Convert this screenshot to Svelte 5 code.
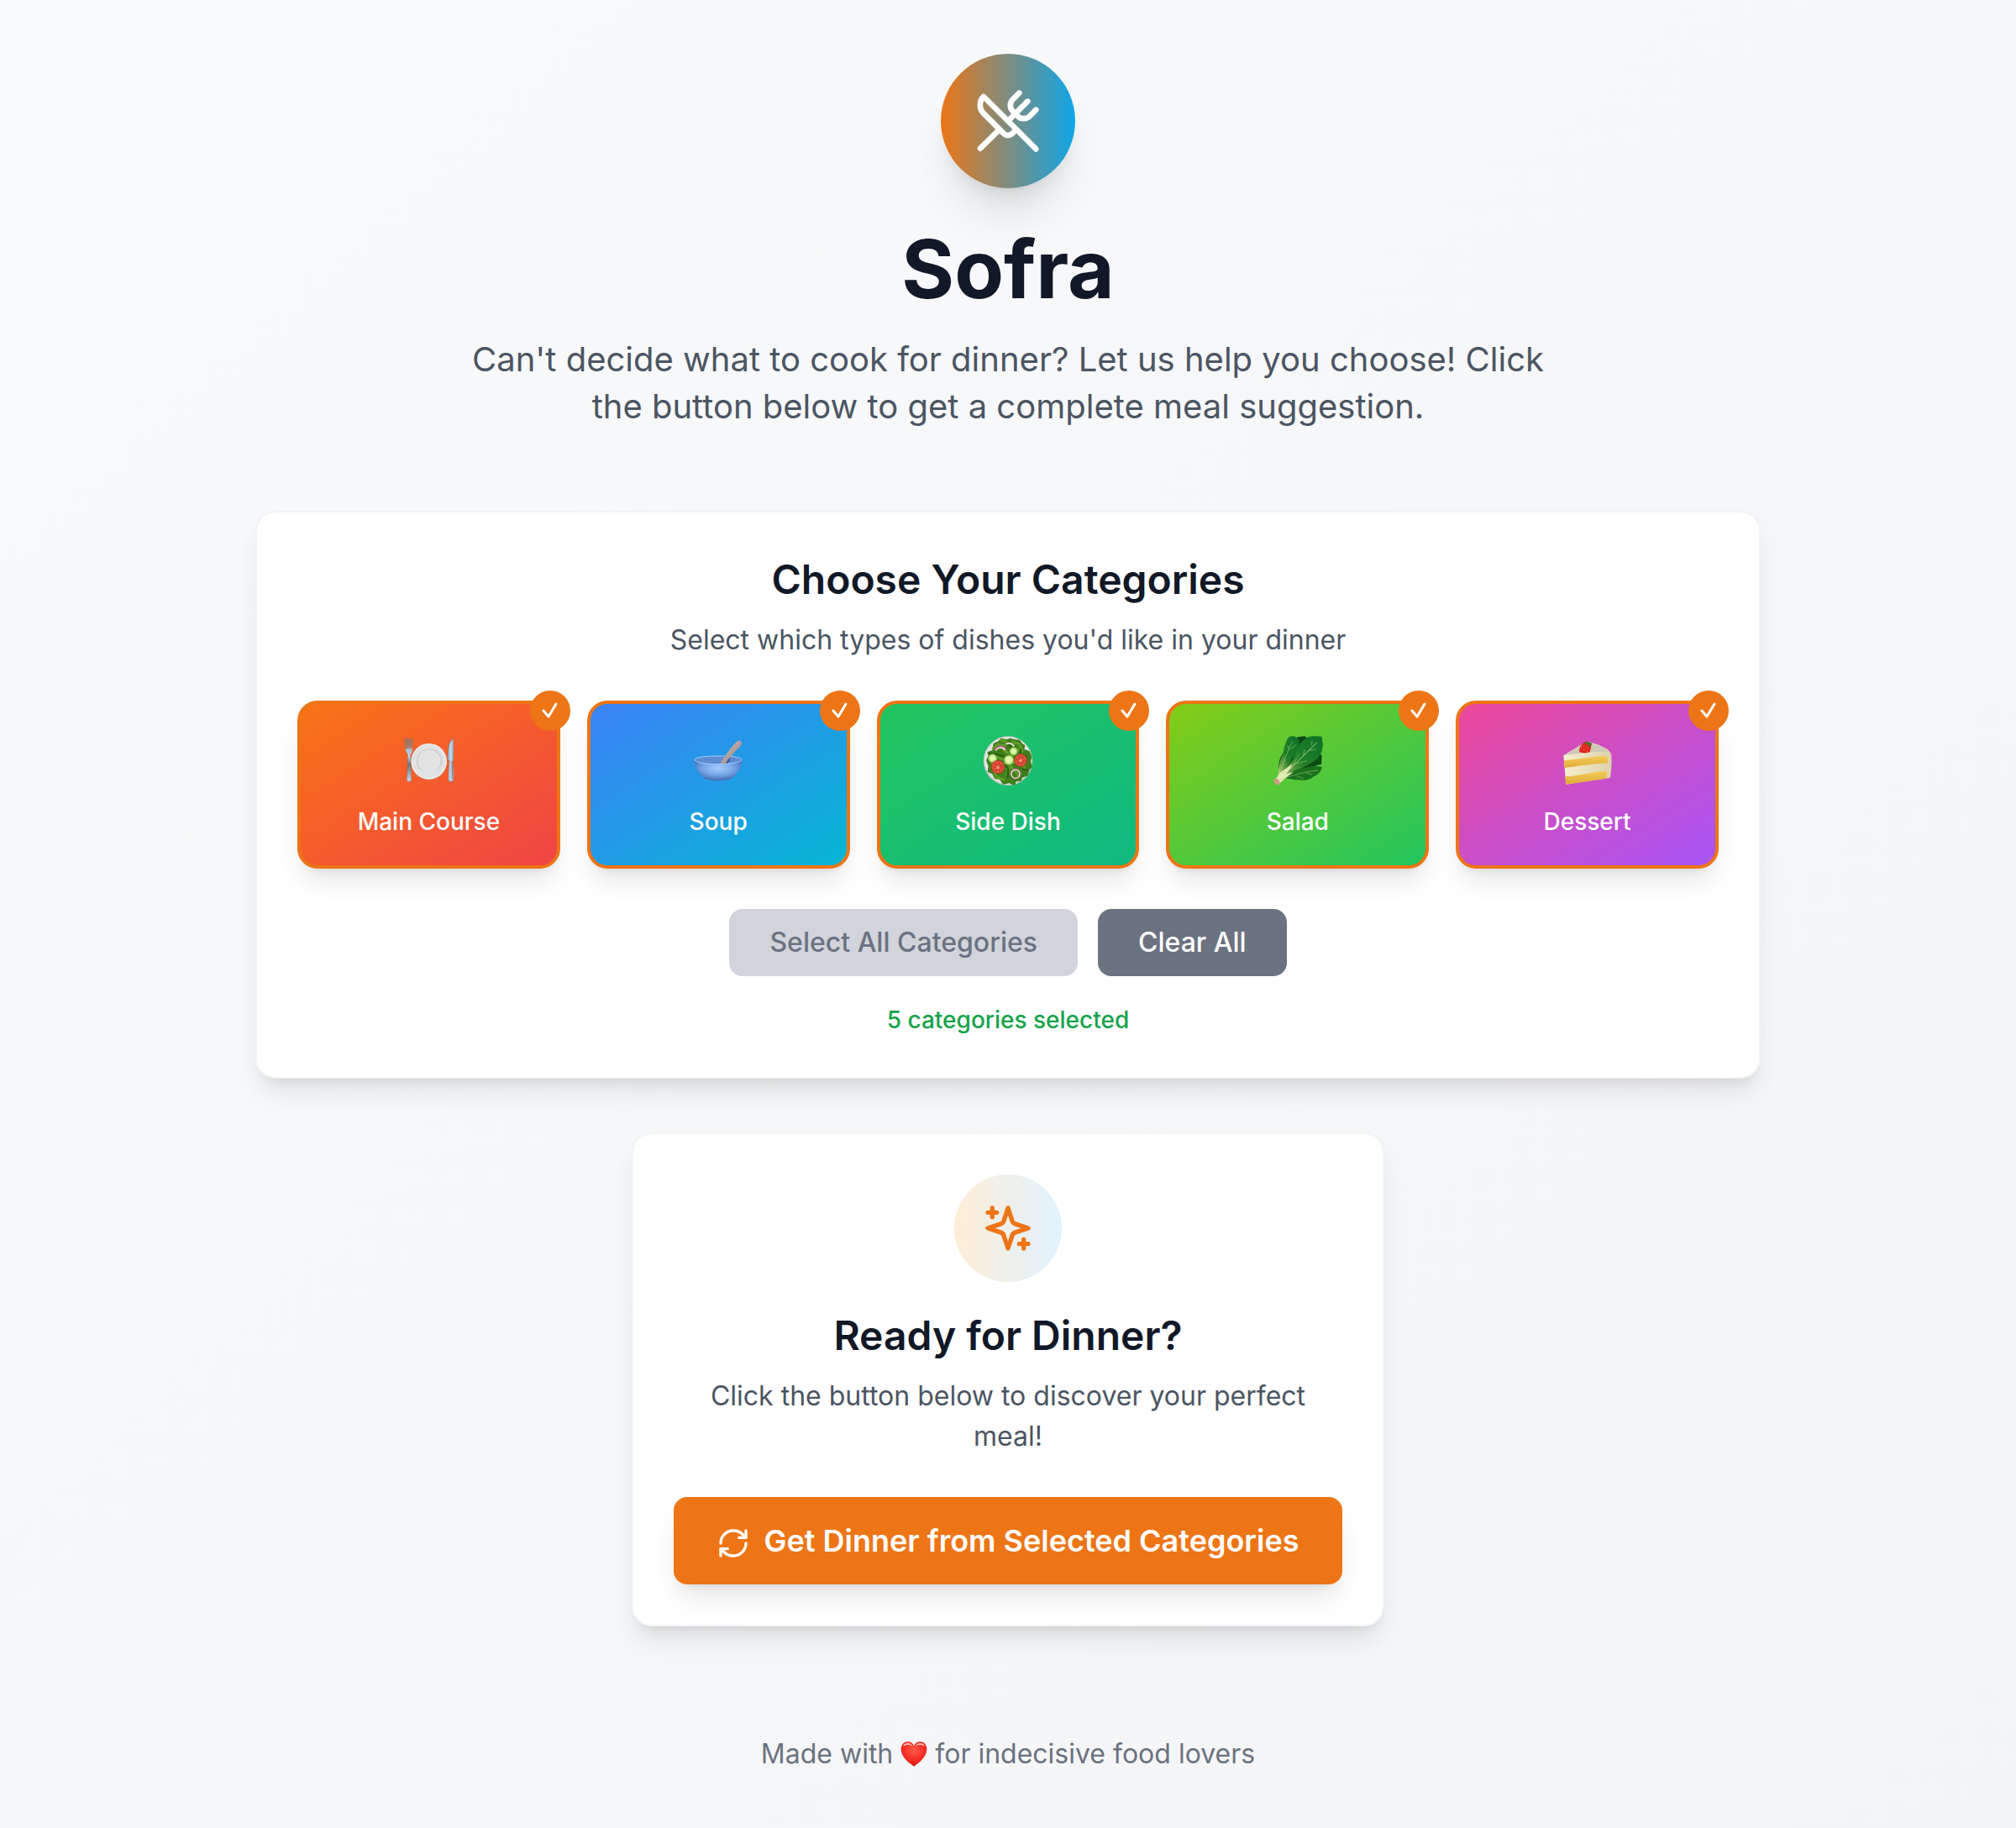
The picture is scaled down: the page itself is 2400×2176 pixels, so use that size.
<script>
  const categories = [
    { id: 'main', label: 'Main Course' },
    { id: 'soup', label: 'Soup' },
    { id: 'side', label: 'Side Dish' },
    { id: 'salad', label: 'Salad' },
    { id: 'dessert', label: 'Dessert' }
  ];

  let selected = $state(categories.map((c) => c.id));

  function toggle(id) {
    selected = selected.includes(id) ? selected.filter((s) => s !== id) : [...selected, id];
  }

  function selectAll() {
    selected = categories.map((c) => c.id);
  }

  function clearAll() {
    selected = [];
  }
</script>

{#snippet plate()}
  <defs>
    <linearGradient id="steel" x1="0" y1="0" x2="0" y2="1">
      <stop offset="0" stop-color="#8b7f7d" />
      <stop offset="0.4" stop-color="#c5dcf3" />
      <stop offset="0.6" stop-color="#6d7076" />
      <stop offset="1" stop-color="#c6dcf0" />
    </linearGradient>
    <linearGradient id="blade" x1="0" y1="0" x2="1" y2="0">
      <stop offset="0" stop-color="#8fa5bd" />
      <stop offset="0.5" stop-color="#c9dbef" />
      <stop offset="1" stop-color="#8797aa" />
    </linearGradient>
  </defs>
  <path d="M5 10h4v34h3V10h3v34h3V10h3v34h3V10h3v34h3V10h3v40c0 9-3 13-7 16l3 90c0 5-4 7-8 7s-9-2-8-7l4-90c-5-4-8-8-9-17Z" fill="url(#steel)" stroke="#6b6664" />
  <circle cx="92" cy="93" r="64" fill="#a89a94" opacity="0.6" />
  <circle cx="92" cy="91" r="64" fill="#ececec" />
  <circle cx="92" cy="90" r="60" fill="#e2e2e2" />
  <circle cx="93" cy="91" r="46" fill="#c9ced3" />
  <path d="M49 100c5 24 23 36 44 36s39-12 44-36c-5 20-22 32-44 32s-39-12-44-32Z" fill="#e8f2fb" />
  <circle cx="93" cy="90" r="41" fill="#e3e3e3" />
  <path d="M181 10c-15 4-22 30-22 68 0 7 4 10 7 11l-4 67c0 5 4 7 8 7s10-2 10-7l-4-67c3-1 5-4 5-8Z" fill="url(#blade)" stroke="#7a8492" stroke-width="2" />
  <path d="M165 88h11l4 66c0 4-4 6-9 6s-9-2-9-6Z" fill="#b7cce2" />
  <path d="M174 90l3 65" stroke="#7b8593" stroke-width="4" />
{/snippet}

{#snippet bowl()}
  <defs>
    <radialGradient id="bowlBody" cx="0.5" cy="0.4" r="0.55">
      <stop offset="0" stop-color="#a5cdfb" />
      <stop offset="0.6" stop-color="#76a5e6" />
      <stop offset="1" stop-color="#4a74bb" />
    </radialGradient>
    <linearGradient id="spoon" x1="0" y1="0" x2="1" y2="1">
      <stop offset="0" stop-color="#d3c1bb" />
      <stop offset="1" stop-color="#8c7f85" />
    </linearGradient>
  </defs>
  <path d="M4 86c4 32 22 61 48 70 22 5 54 5 75 0 26-9 45-38 49-70Z" fill="url(#bowlBody)" />
  <ellipse cx="90" cy="86" rx="85" ry="14" fill="#5f8bd3" />
  <path d="M120 98c5-2 9-5 11-10l2-12-18 22Z" fill="#29558f" />
  <path d="M5 86c5 9 39 15 85 15s80-6 85-15c-2-10-36-14-85-14S7 76 5 86Z" fill="none" stroke="#a9ceff" stroke-width="3" />
  <path d="M98 99c13-23 33-54 58-78 7-7 19-4 18 6-1 5-2 7-6 11-21 20-39 41-53 61Z" fill="url(#spoon)" />
  <path d="M40 151c31 9 69 9 99 0-20 11-79 11-99 0Z" fill="#466db0" />
{/snippet}

{#snippet sideDish()}
  <circle cx="90" cy="89" r="88" fill="#b9bfbd" />
  <circle cx="90" cy="88" r="85" fill="#dfe3e0" />
  <path d="M38 27l18-8 9-11 20 5 13-5 15 5 19 1 9 14 10 5-3 14 19 8 8 19-4 18 6 18-11 12-5 20-20 7-4 12-18 2-5 14-19-8-23 4-11-17-19-3-8-17-17-7 3-22-8-20 8-15-4-14 18-7Z" fill="#3f7e1b" />
  <path d="M62 14l25 9-12 13-20-7-20 18m67-26l28 8 12 26-22-8M27 97l22-21 34 11-15 27m3-67l34 24-10 29 31-12 27 29m-56-5l-14 33m-45-25l12 28 29 9m15-54l22 23 16 23M75 107l20 18" fill="none" stroke="#5f9c28" stroke-width="9" stroke-linejoin="round" />
  <path d="M22 62l28 4 26 7m11-51l14 18-4 26m38-20l-2 22 24 7m-80 31l14 12-3 31m53-31l21 5" fill="none" stroke="#275d13" stroke-width="6" />
  <path d="M44 51c3-10 10-14 20-14 9 0 17 5 18 14" fill="none" stroke="#bd5687" stroke-width="5" />
  <path d="M46 53c5-9 11-11 18-11 7 0 13 4 16 9" fill="none" stroke="#f5e6e6" stroke-width="4" />
  <path d="M84 29c9-5 21-2 28 8" fill="none" stroke="#f3dce2" stroke-width="6" />
  <g fill="#cbe990" stroke="#6da72b" stroke-width="3">
    <circle cx="35" cy="80" r="15" />
    <circle cx="110" cy="55" r="14" />
    <circle cx="93" cy="86" r="17" />
  </g>
  <g fill="#e3f7af">
    <circle cx="35" cy="80" r="8" />
    <circle cx="110" cy="55" r="7" />
    <circle cx="93" cy="86" r="10" />
  </g>
  <g fill="#df513a" stroke="#bc3929" stroke-width="3">
    <circle cx="54" cy="111" r="23" />
    <circle cx="135" cy="87" r="22" />
  </g>
  <g fill="none" stroke="#b83a2a" stroke-width="6" stroke-dasharray="5 7">
    <circle cx="54" cy="111" r="13" />
    <circle cx="135" cy="87" r="12" />
  </g>
  <g fill="#f6a177">
    <circle cx="54" cy="113" r="5" />
    <circle cx="135" cy="88" r="5" />
  </g>
  <circle cx="117" cy="135" r="17" fill="none" stroke="#ae6585" stroke-width="5" />
  <circle cx="117" cy="136" r="15" fill="none" stroke="#e9dfd5" stroke-width="4" />
{/snippet}

{#snippet greens()}
  <defs>
    <linearGradient id="leaf" x1="1" y1="0" x2="0" y2="1">
      <stop offset="0" stop-color="#0d7025" />
      <stop offset="0.55" stop-color="#1f8029" />
      <stop offset="0.8" stop-color="#74a64c" />
      <stop offset="1" stop-color="#e4edc0" />
    </linearGradient>
  </defs>
  <path d="M24 140C18 112 22 80 37 62L90 4l25-3 35 30 26 40-2 30Z" fill="#0f4a15" />
  <path d="M20 150c-1-32 5-60 16-84 4-16 8-38 17-56 8-13 29-13 39 2 8 14 3 30-7 44-13 18-29 50-39 76-5 11-14 18-26 18Z" fill="url(#leaf)" />
  <path d="M24 158c13-12 27-46 48-72C84 47 101 19 119 8c14-9 38-8 55-6 6 9 1 17 6 26 2 7-4 12-3 20-3 20-18 37-39 49-29 18-56 25-76 43Z" fill="url(#leaf)" />
  <path d="M35 150c29-14 39-31 68-34 30-5 43-12 73-5 3 4-3 7-4 12-4 13-20 18-30 26-16 12-47 9-63 8-13-5-30-4-44-7Z" fill="#19701d" />
  <path d="M21 147C33 104 48 65 72 19m-43 108l16-46m16-28l-8-20m13 13l18-14M67 116L94 65m-8 33l37-9m-13-17l4-25m17 5l26-4m-18-14l2-18M36 152c34-9 65-22 126-29m-76 20l25 10m8-22l23 8" fill="none" stroke="#8fbf68" stroke-width="2" />
  <path d="M25 154C69 111 106 75 158 24" fill="none" stroke="#b9d78f" stroke-width="3" />
  <path d="M4 158c16-9 19-28 31-33l36-25c-7 18-15 28-24 36l28-7c-18 14-35 24-53 44Z" fill="#e0e8b4" />
  <path d="M4 158c5-6 9-7 15-3 6 4 9 10 6 17-10 9-26-8-21-14Z" fill="#c7a283" />
{/snippet}

{#snippet cake()}
  <defs>
    <linearGradient id="sponge" x1="0" y1="0" x2="0" y2="1">
      <stop offset="0" stop-color="#f3cc58" />
      <stop offset="1" stop-color="#dfab38" />
    </linearGradient>
    <linearGradient id="icing" x1="0" y1="0" x2="1" y2="0">
      <stop offset="0" stop-color="#f8efcf" />
      <stop offset="1" stop-color="#ddd0ab" />
    </linearGradient>
  </defs>
  <path d="M4 70L80 24c14-4 27 0 43 6 31 13 50 20 52 42 2 26 0 48-4 77L13 173Z" fill="url(#icing)" />
  <path d="M6 69L80 24c15-3 28 2 40 7 20 9 35 15 44 26-41-3-92 6-158 12Z" fill="#cfc9b8" />
  <path d="M6 87c59-3 94-14 145-15 8 0 11 5 11 25-48 2-101 10-154 17Z" fill="url(#sponge)" />
  <path d="M9 145c50-2 98-17 149-20v27L13 173Z" fill="url(#sponge)" />
  <path d="M75 25c8-8 19-4 27 4 3 10-2 21-4 28-13 6-28 4-38 0 0-14 5-24 15-32Z" fill="#e3261f" />
  <path d="M79 23c4-1 5 3 8 1l2-6 5 6c8-2 12 3 11 8l-8-1 5 11c-7 0-10-5-11-12-6 2-9-2-12-7Z" fill="#43762b" />
  <path d="M68 38v3m9 6v3m10-10v3m-12-9v2m13 17v2" stroke="#fca78d" stroke-width="3" />
{/snippet}

<main>
  <header class="intro">
    <div class="logo">
      <svg class="icon" viewBox="0 0 24 24" aria-hidden="true">
        <path d="m16 2-2.3 2.3a3 3 0 0 0 0 4.2l1.8 1.8a3 3 0 0 0 4.2 0L22 8" />
        <path d="M15 15 3.3 3.3a4.2 4.2 0 0 0 0 6l7.3 7.3c.7.7 2 .7 2.8 0L15 15Zm0 0 7 7" />
        <path d="m2.1 21.8 6.4-6.3" />
        <path d="m19 5-7 7" />
      </svg>
    </div>
    <h1>Sofra</h1>
    <p>Can't decide what to cook for dinner? Let us help you choose! Click the button below to get a complete meal suggestion.</p>
  </header>

  <section class="card chooser">
    <h2>Choose Your Categories</h2>
    <p class="lead">Select which types of dishes you'd like in your dinner</p>

    <div class="grid">
      {#each categories as category (category.id)}
        {@const on = selected.includes(category.id)}
        <button type="button" class="category {category.id}" class:on aria-pressed={on} onclick={() => toggle(category.id)}>
          <span class="picture">
            <svg viewBox="0 0 180 180" aria-hidden="true">
              {#if category.id === 'main'}
                {@render plate()}
              {:else if category.id === 'soup'}
                {@render bowl()}
              {:else if category.id === 'side'}
                {@render sideDish()}
              {:else if category.id === 'salad'}
                {@render greens()}
              {:else}
                {@render cake()}
              {/if}
            </svg>
          </span>
          <span class="label">{category.label}</span>
          {#if on}
            <span class="badge">
              <svg viewBox="0 0 48 48" aria-hidden="true">
                <path d="M16 24l6 7 9-15" />
              </svg>
            </span>
          {/if}
        </button>
      {/each}
    </div>

    <div class="actions">
      <button type="button" class="action" disabled={selected.length === categories.length} onclick={selectAll}>Select All Categories</button>
      <button type="button" class="action" disabled={selected.length === 0} onclick={clearAll}>Clear All</button>
    </div>
    <p class="count">{selected.length} categories selected</p>
  </section>

  <section class="card ready">
    <div class="spark">
      <svg class="icon" viewBox="0 0 24 24" aria-hidden="true">
        <path d="m12 3-1.912 5.813a2 2 0 0 1-1.275 1.275L3 12l5.813 1.912a2 2 0 0 1 1.275 1.275L12 21l1.912-5.813a2 2 0 0 1 1.275-1.275L21 12l-5.813-1.912a2 2 0 0 1-1.275-1.275L12 3Z" />
        <path d="M5 3v4M19 17v4M3 5h4M17 19h4" />
      </svg>
    </div>
    <h2>Ready for Dinner?</h2>
    <p class="lead">Click the button below to discover your perfect meal!</p>
    <button type="button" class="primary">
      <svg class="icon" viewBox="0 0 24 24" aria-hidden="true">
        <path d="M3 12a9 9 0 0 1 9-9 9.75 9.75 0 0 1 6.74 2.74L21 8" />
        <path d="M21 3v5h-5" />
        <path d="M21 12a9 9 0 0 1-9 9 9.75 9.75 0 0 1-6.74-2.74L3 16" />
        <path d="M8 16H3v5" />
      </svg>Get Dinner from Selected Categories
    </button>
  </section>

  <footer>
    Made with
    <svg class="heart" viewBox="0 0 96 90" role="img" aria-label="love">
      <defs>
        <radialGradient id="heartFill" cx="0.5" cy="0.35" r="0.65">
          <stop offset="0" stop-color="#ff5a4c" />
          <stop offset="0.7" stop-color="#f2281f" />
          <stop offset="1" stop-color="#c81410" />
        </radialGradient>
      </defs>
      <path d="M48 89C25 73 3 55 2 28 2 11 13 1 26 1c11 0 18 6 22 14C52 7 59 1 70 1c13 0 24 10 24 27-1 27-23 45-46 61Z" fill="url(#heartFill)" />
      <path d="M9 17c4-9 10-11 17-11 8 0 13 4 17 10-10-5-23-6-34 1Zm44-1c4-6 9-10 17-10 7 0 13 2 17 11-11-7-24-6-34-1Z" fill="#ffc2b8" />
    </svg>
    for indecisive food lovers
  </footer>
</main>

<style>
  :global(body) {
    margin: 0;
  }

  main {
    --orange: #ed7516;
    --shadow-lg: 0 20px 30px -6px rgb(0 0 0 / 0.1), 0 8px 12px -8px rgb(0 0 0 / 0.1);
    --shadow-xl: 0 40px 50px -10px rgb(0 0 0 / 0.1), 0 16px 20px -12px rgb(0 0 0 / 0.1);
    box-sizing: border-box;
    min-height: 100vh;
    padding: 64px 32px;
    display: flex;
    flex-direction: column;
    align-items: center;
    background: linear-gradient(to bottom right, #f9fafb, #f3f4f6);
    color: #111827;
    font-family: Inter, 'Liberation Sans', sans-serif;
    font-size: 32px;
    line-height: 48px;
    text-align: center;
  }

  h1,
  h2,
  p {
    margin: 0;
  }

  button {
    border: 0;
    font-family: inherit;
    cursor: pointer;
  }

  svg {
    display: block;
  }

  .icon {
    fill: none;
    stroke: currentColor;
    stroke-width: 2;
    stroke-linecap: round;
    stroke-linejoin: round;
  }

  .intro {
    display: flex;
    flex-direction: column;
    align-items: center;
    margin-bottom: 96px;
  }

  .logo,
  .spark {
    display: flex;
    align-items: center;
    justify-content: center;
    border-radius: 50%;
  }

  .logo {
    width: 160px;
    height: 160px;
    margin-bottom: 48px;
    color: #fff;
    background: linear-gradient(to right, var(--orange), #0ea5e9);
    box-shadow: var(--shadow-xl);
  }

  .logo .icon {
    width: 80px;
  }

  h1 {
    margin-bottom: 32px;
    font-size: 96px;
    line-height: 96px;
    font-weight: 700;
  }

  .intro p {
    max-width: 1344px;
    color: #4b5563;
    font-size: 40px;
    line-height: 56px;
  }

  .card {
    box-sizing: border-box;
    width: 100%;
    padding: 48px;
    border: 2px solid #f3f4f6;
    border-radius: 24px;
    background: #fff;
    box-shadow: var(--shadow-lg);
  }

  .chooser {
    max-width: 1792px;
    margin-bottom: 64px;
  }

  .ready {
    max-width: 896px;
    margin-bottom: 128px;
  }

  h2 {
    margin-bottom: 16px;
    font-size: 48px;
    line-height: 64px;
    font-weight: 600;
  }

  .lead {
    margin-bottom: 48px;
    color: #4b5563;
  }

  .grid {
    display: grid;
    grid-template-columns: repeat(5, 1fr);
    gap: 32px;
    margin-bottom: 48px;
  }

  .category {
    position: relative;
    display: flex;
    flex-direction: column;
    align-items: center;
    gap: 16px;
    padding: 32px;
    border: 4px solid transparent;
    border-radius: 24px;
    color: #fff;
    font-size: 28px;
    line-height: 40px;
    font-weight: 500;
    box-shadow: var(--shadow-lg);
  }

  .category.on {
    border-color: var(--orange);
  }

  .main {
    background: linear-gradient(to bottom right, #f97316, #ef4444);
  }

  .soup {
    background: linear-gradient(to bottom right, #3b82f6, #06b6d4);
  }

  .side {
    background: linear-gradient(to bottom right, #22c55e, #10b981);
  }

  .salad {
    background: linear-gradient(to bottom right, #84cc16, #22c55e);
  }

  .dessert {
    background: linear-gradient(to bottom right, #ec4899, #a855f7);
  }

  .picture {
    display: flex;
    align-items: center;
    height: 72px;
  }

  .picture svg {
    width: 60px;
    height: 60px;
  }

  .badge {
    position: absolute;
    top: -16px;
    right: -16px;
    width: 48px;
    height: 48px;
    border-radius: 50%;
    background: var(--orange);
  }

  .badge path {
    fill: none;
    stroke: #fff;
    stroke-width: 3;
    stroke-linecap: round;
    stroke-linejoin: round;
  }

  .actions {
    display: flex;
    flex-wrap: wrap;
    justify-content: center;
    gap: 24px;
    margin-bottom: 32px;
  }

  .action {
    padding: 16px 48px;
    border-radius: 16px;
    background: #6b7280;
    color: #fff;
    font-size: 32px;
    line-height: 48px;
    font-weight: 500;
  }

  .action:disabled {
    background: #d1d5db;
    color: #6b7280;
    cursor: not-allowed;
  }

  .count {
    color: #16a34a;
    font-size: 28px;
    line-height: 40px;
    font-weight: 500;
  }

  .spark {
    width: 128px;
    height: 128px;
    margin: 0 auto 32px;
    color: var(--orange);
    background: linear-gradient(to right, #fdedd7, #e0f2fe);
  }

  .spark .icon {
    width: 64px;
  }

  .primary {
    width: 100%;
    padding: 24px 48px;
    border-radius: 16px;
    background: var(--orange);
    color: #fff;
    font-size: 36px;
    line-height: 56px;
    font-weight: 600;
    box-shadow: var(--shadow-lg);
  }

  .primary .icon {
    display: inline-block;
    width: 40px;
    height: 40px;
    margin-right: 16px;
    vertical-align: middle;
  }

  footer {
    color: #6b7280;
  }

  .heart {
    display: inline-block;
    width: 32px;
    height: 30px;
    vertical-align: -4px;
  }

  @media (max-width: 1500px) {
    .grid {
      grid-template-columns: repeat(auto-fit, minmax(260px, 1fr));
    }
  }
</style>
